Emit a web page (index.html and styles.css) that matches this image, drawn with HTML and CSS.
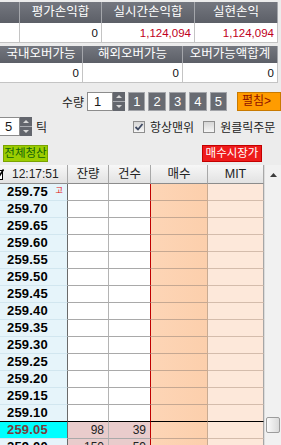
FILE: index.html
```html
<!DOCTYPE html>
<html lang="ko">
<head>
    <meta charset="UTF-8">
    <meta name="viewport" content="width=device-width, initial-scale=1.0">
    <title>호가 주문</title>
    <link rel="stylesheet" href="styles.css">
</head>
<body>

<!-- 손익 요약 -->
<div class="summary">
    <div class="sum-row row-a head">
        <div></div>
        <div>평가손익합</div>
        <div>실시간손익합</div>
        <div>실현손익</div>
    </div>
    <div class="sum-row row-a val">
        <div></div>
        <div>0</div>
        <div class="minus">1,124,094</div>
        <div class="minus">1,124,094</div>
    </div>
    <div class="sum-row row-b head">
        <div>국내오버가능</div>
        <div>해외오버가능</div>
        <div>오버가능액합계</div>
    </div>
    <div class="sum-row row-b val">
        <div>0</div>
        <div>0</div>
        <div>0</div>
    </div>
</div>

<!-- 수량 선택 -->
<div class="ctl ctl-qty">
    <span class="lbl">수량</span>
    <div class="spin">
        <div class="spin-box">1</div>
        <div class="spin-btns">
            <svg width="12" height="19" viewBox="0 0 12 19">
                <rect x="0" y="0" width="12" height="9" fill="#63666d"/>
                <rect x="0" y="10" width="12" height="9" fill="#63666d"/>
                <rect x="0" y="9" width="12" height="1" fill="#a9abb0"/>
                <path d="M3 6 L6 3 L9 6 Z" fill="#d8d8d8"/>
                <path d="M3 13 L6 16 L9 13 Z" fill="#d8d8d8"/>
            </svg>
        </div>
    </div>
    <div class="num">1</div>
    <div class="num">2</div>
    <div class="num">3</div>
    <div class="num">4</div>
    <div class="num">5</div>
    <div class="btn-open">펼침&gt;</div>
</div>

<!-- 틱 / 옵션 -->
<div class="ctl ctl-tick">
    <div class="spin">
        <div class="spin-box small">5</div>
        <div class="spin-btns">
            <svg width="12" height="19" viewBox="0 0 12 19">
                <rect x="0" y="0" width="12" height="9" fill="#63666d"/>
                <rect x="0" y="10" width="12" height="9" fill="#63666d"/>
                <rect x="0" y="9" width="12" height="1" fill="#a9abb0"/>
                <path d="M3 6 L6 3 L9 6 Z" fill="#d8d8d8"/>
                <path d="M3 13 L6 16 L9 13 Z" fill="#d8d8d8"/>
            </svg>
        </div>
    </div>
    <span class="lbl tick">틱</span>
    <span class="chk checked">
        <svg width="10" height="10" viewBox="0 0 10 10"><path d="M1.5 5 L4 7.5 L8.5 2" stroke="#3f4a63" stroke-width="1.8" fill="none"/></svg>
    </span>
    <span class="chk-lbl">항상맨위</span>
    <span class="chk second"></span>
    <span class="chk-lbl">원클릭주문</span>
</div>

<!-- 청산 / 시장가 -->
<div class="ctl ctl-act">
    <div class="btn-clear">전체청산</div>
    <div class="btn-market">매수시장가</div>
</div>

<!-- 호가 테이블 -->
<div class="board">
    <div class="tbl">
        <div class="tr th">
            <div class="c price"><span class="hd-icon"><svg width="9" height="11" viewBox="0 0 9 11"><rect x="0.5" y="1.5" width="7" height="9" fill="#fff" stroke="#000"/><path d="M1 6 L3.5 8.5 L8.5 0.5" stroke="#000" stroke-width="1.6" fill="none"/></svg></span>12:17:51</div>
            <div class="c rem">잔량</div>
            <div class="c cnt">건수</div>
            <div class="c buy">매수</div>
            <div class="c mit">MIT</div>
        </div>
        <div class="tr"><div class="c price">259.75<span class="hi">고</span></div><div class="c rem"></div><div class="c cnt"></div><div class="c buy"></div><div class="c mit"></div></div>
        <div class="tr"><div class="c price">259.70</div><div class="c rem"></div><div class="c cnt"></div><div class="c buy"></div><div class="c mit"></div></div>
        <div class="tr"><div class="c price">259.65</div><div class="c rem"></div><div class="c cnt"></div><div class="c buy"></div><div class="c mit"></div></div>
        <div class="tr"><div class="c price">259.60</div><div class="c rem"></div><div class="c cnt"></div><div class="c buy"></div><div class="c mit"></div></div>
        <div class="tr"><div class="c price">259.55</div><div class="c rem"></div><div class="c cnt"></div><div class="c buy"></div><div class="c mit"></div></div>
        <div class="tr"><div class="c price">259.50</div><div class="c rem"></div><div class="c cnt"></div><div class="c buy"></div><div class="c mit"></div></div>
        <div class="tr"><div class="c price">259.45</div><div class="c rem"></div><div class="c cnt"></div><div class="c buy"></div><div class="c mit"></div></div>
        <div class="tr"><div class="c price">259.40</div><div class="c rem"></div><div class="c cnt"></div><div class="c buy"></div><div class="c mit"></div></div>
        <div class="tr"><div class="c price">259.35</div><div class="c rem"></div><div class="c cnt"></div><div class="c buy"></div><div class="c mit"></div></div>
        <div class="tr"><div class="c price">259.30</div><div class="c rem"></div><div class="c cnt"></div><div class="c buy"></div><div class="c mit"></div></div>
        <div class="tr"><div class="c price">259.25</div><div class="c rem"></div><div class="c cnt"></div><div class="c buy"></div><div class="c mit"></div></div>
        <div class="tr"><div class="c price">259.20</div><div class="c rem"></div><div class="c cnt"></div><div class="c buy"></div><div class="c mit"></div></div>
        <div class="tr"><div class="c price">259.15</div><div class="c rem"></div><div class="c cnt"></div><div class="c buy"></div><div class="c mit"></div></div>
        <div class="tr mark"><div class="c price">259.10</div><div class="c rem"></div><div class="c cnt"></div><div class="c buy"></div><div class="c mit"></div></div>
        <div class="tr cur"><div class="c price">259.05</div><div class="c rem bid">98</div><div class="c cnt bid">39</div><div class="c buy"></div><div class="c mit"></div></div>
        <div class="tr"><div class="c price">259.00</div><div class="c rem bid">150</div><div class="c cnt bid">59</div><div class="c buy"></div><div class="c mit"></div></div>
    </div>
    <div class="scroll">
        <div class="scroll-up">
            <svg width="7" height="4" viewBox="0 0 7 4"><path d="M0 4 L3.5 0 L7 4 Z" fill="#3c3c3c"/></svg>
        </div>
        <div class="scroll-thumb"></div>
    </div>
</div>

</body>
</html>
```

FILE: styles.css
```css
html, body {
    margin: 0;
    padding: 0;
    height: 445px;
    overflow: hidden;
}

body {
    font-family: 'Liberation Sans', 'Noto Sans CJK KR', sans-serif;
    font-size: 12px;
    background-color: #ececec;
    color: #1a1a1a;
    width: 281px;
}

/* Summary tables */
.summary {
    padding-top: 2px;
}

.sum-row {
    display: grid;
    width: 278px;
}

.row-a {
    grid-template-columns: 20px 82px 93px 83px;
}

.row-b {
    grid-template-columns: 83px 100px 95px;
    margin-top: 3px;
}

.sum-row.val {
    margin-top: 0;
}

.head > div {
    height: 21px;
    line-height: 21px;
    background: linear-gradient(#74777f, #5c5f67);
    color: #fff;
    text-align: center;
    border-right: 1px solid #a4a6ab;
    box-sizing: border-box;
    white-space: nowrap;
    overflow: hidden;
    font-size: 12.5px;
}

.row-b.head > div {
    height: 17px;
    line-height: 17px;
}

.val > div {
    height: 20px;
    line-height: 20px;
    background: #fff;
    text-align: right;
    padding-right: 3px;
    border-right: 1px solid #c4c4c4;
    border-bottom: 1px solid #c4c4c4;
    box-sizing: border-box;
    font-size: 11.5px;
    color: #111;
}

.val > div.minus {
    color: #c0001c;
}

/* Controls */
.ctl {
    display: flex;
    align-items: center;
    white-space: nowrap;
}

.ctl-qty {
    margin-top: 9px;
    height: 19px;
    padding-left: 62px;
}

.lbl {
    font-size: 12px;
    color: #222;
    margin-right: 2px;
    width: 24px;
}

.spin {
    display: flex;
    height: 19px;
}

.spin-box {
    width: 26px;
    height: 19px;
    box-sizing: border-box;
    background: #fff;
    border: 1px solid #8c8c8c;
    font-size: 13px;
    line-height: 17px;
    padding-left: 6px;
}

.spin-box.small {
    width: 20px;
    border-left: none;
    padding-left: 5px;
}

.spin-btns {
    width: 12px;
    height: 19px;
}

.spin-btns svg {
    display: block;
}

.num {
    width: 18px;
    height: 19px;
    box-sizing: border-box;
    margin-left: 3px;
    background: #686b72;
    border: 1px solid #a2a4a9;
    color: #fff;
    font-size: 13px;
    line-height: 17px;
    text-align: center;
}

.num:first-of-type {
    margin-left: 2px;
}

.btn-open {
    margin-left: 10px;
    width: 44px;
    height: 19px;
    box-sizing: border-box;
    background: #ff9c00;
    border: 1px solid #c97a00;
    color: #8f1200;
    line-height: 17px;
    padding-left: 4px;
    flex-shrink: 0;
}

.ctl-tick {
    margin-top: 6px;
    height: 19px;
}

.lbl.tick {
    margin-left: 4px;
    width: 12px;
}

.chk {
    width: 12px;
    height: 12px;
    box-sizing: border-box;
    border: 1px solid #8e8e8e;
    background: linear-gradient(#d6d6d6, #f6f6f6);
    display: flex;
    align-items: center;
    justify-content: center;
    margin-left: 83px;
}

.chk.second {
    margin-left: 9px;
}

.chk-lbl {
    margin-left: 5px;
    color: #222;
}

.ctl-act {
    margin-top: 9px;
    height: 17px;
}

.btn-clear {
    margin-left: 3px;
    width: 45px;
    height: 17px;
    box-sizing: border-box;
    background: #9ccd00;
    border: 1px solid #7aa300;
    color: #12610a;
    line-height: 15px;
    text-align: center;
    font-size: 11.5px;
}

.btn-market {
    margin-left: 154px;
    width: 60px;
    height: 17px;
    box-sizing: border-box;
    background: #ee1b1b;
    border: 1px solid #c40000;
    color: #fff;
    line-height: 15px;
    text-align: center;
    font-size: 11.5px;
}

/* Order board */
.board {
    display: flex;
    margin-top: 3px;
}

.tbl {
    width: 264px;
    background: #fff;
}

.tr {
    display: grid;
    grid-template-columns: 68px 41px 42px 57px 56px;
    height: 17px;
}

.c {
    box-sizing: border-box;
    height: 17px;
    border-bottom: 1px solid #a9a9a9;
    border-right: 1px solid #b4b4b4;
    font-size: 12px;
    line-height: 16px;
    text-align: right;
    padding-right: 4px;
    white-space: nowrap;
    overflow: hidden;
}

.c.price {
    background: #e6f4fa;
    border-right-color: #6a6a6a;
    border-bottom-color: #d2e6ef;
    font-weight: bold;
    font-size: 13px;
    letter-spacing: 0.2px;
    color: #000;
    text-align: left;
    padding-left: 7px;
    display: flex;
    justify-content: space-between;
}

.hi {
    font-size: 8px;
    font-weight: normal;
    color: #e01010;
    line-height: 14px;
}

.c.cnt {
    border-right-color: #c00000;
}

.c.buy {
    background: linear-gradient(90deg, #fdd5b6, #fccfac);
    border-right-color: #c9ab92;
    border-bottom-color: #c6a892;
}

.c.mit {
    background: #fde8da;
    border-right-color: #a6a6a6;
    border-bottom-color: #d4bcac;
}

.c.bid {
    background: #e9cccc;
    color: #222;
}

.th {
    height: 19px;
}

.th .c {
    height: 19px;
    line-height: 18px;
    background: linear-gradient(#f7f7f7, #e2e2e2);
    border-bottom-color: #8c8c8c;
    border-right-color: #a8a8a8;
    text-align: center;
    padding: 0;
    font-weight: normal;
    font-size: 12.5px;
    letter-spacing: 0;
    color: #222;
}

.th .c.price {
    background: linear-gradient(#f7f7f7, #e2e2e2);
    border-bottom-color: #8c8c8c;
    justify-content: flex-start;
    font-size: 12px;
}

.hd-icon {
    display: flex;
    align-items: center;
    margin-left: -5px;
    margin-right: 8px;
}

.mark .c {
    border-bottom-color: #000;
}

.cur .c.price {
    background: #00ffff;
    color: #7a3c3c;
}

/* Scrollbar */
.scroll {
    width: 17px;
    background: #f1f1f1;
    border-left: 1px solid #dcdcdc;
    box-sizing: border-box;
}

.scroll-up {
    height: 19px;
    display: flex;
    align-items: center;
    justify-content: center;
}

.scroll-up svg {
    display: block;
}

.scroll-thumb {
    margin-top: 233px;
    margin-left: 1px;
    width: 14px;
    height: 16px;
    box-sizing: border-box;
    border: 1px solid #9c9c9c;
    border-radius: 2px;
    background: linear-gradient(90deg, #fafafa, #dadada);
}
```
